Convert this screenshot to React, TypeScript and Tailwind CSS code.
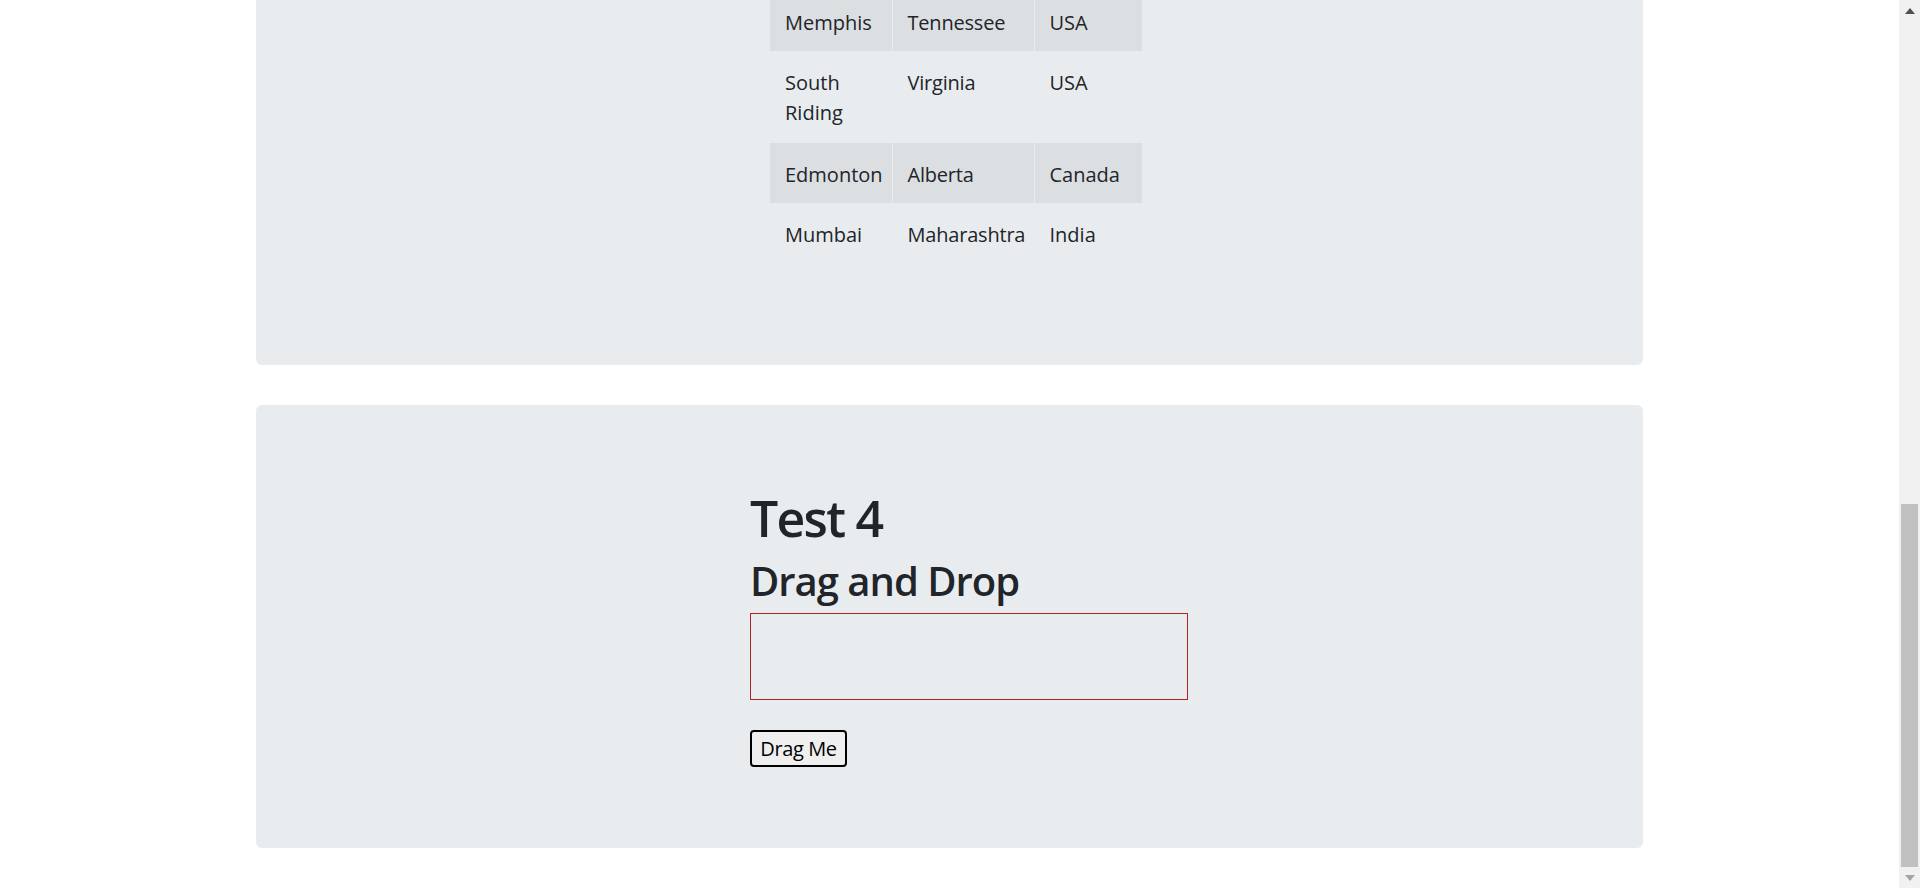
import React from "react";

type Place = { city: string; state: string; country: string; tall?: boolean };

const places: Place[] = [
  { city: "Memphis", state: "Tennessee", country: "USA" },
  { city: "South Riding", state: "Virginia", country: "USA", tall: true },
  { city: "Edmonton", state: "Alberta", country: "Canada" },
  { city: "Mumbai", state: "Maharashtra", country: "India" },
];

function Scrollbar() {
  return (
    <div className="flex w-[21px] shrink-0 flex-col bg-[#f1f1f1]">
      <div className="flex h-[21px] items-center justify-center">
        <svg width="10" height="6" viewBox="0 0 10 6">
          <path d="M5 0L10 6H0z" fill="#505050" />
        </svg>
      </div>
      <div className="flex flex-1 flex-col justify-end px-[2px]">
        <div className="h-[363px] bg-[#c1c1c1]" />
      </div>
      <div className="flex h-[21px] items-center justify-center">
        <svg width="10" height="6" viewBox="0 0 10 6">
          <path d="M0 0H10L5 6z" fill="#a3a3a3" />
        </svg>
      </div>
    </div>
  );
}

export default function App() {
  return (
    <div
      className="flex h-[888px] overflow-hidden bg-white text-[#212529]"
      style={{ fontFamily: '"Open Sans", "Noto Sans", sans-serif' }}
    >
      <main className="min-w-0 flex-1">
        {/* tail of the table card, scrolled past its top */}
        <section className="mx-[256px] -mt-[9px] rounded-b-[6px] bg-[#e9ecef] pb-[102px] pl-[514px]">
          <table className="w-[372px] table-fixed border-collapse text-[20px] leading-[30px]">
            <colgroup>
              <col className="w-[122px]" />
              <col className="w-[142px]" />
              <col className="w-[108px]" />
            </colgroup>
            <tbody>
              {places.map((p, i) => (
                <tr
                  key={p.city}
                  className={`${i % 2 === 0 ? "bg-[#dcdfe2]" : ""} ${p.tall ? "h-[92px]" : "h-[60px]"}`}
                >
                  <td className="px-[15px] pt-[17px] align-top">{p.city}</td>
                  <td className="border-l border-[#e9ecef] pl-[15px] pr-[4px] pt-[17px] align-top tracking-[-0.01em]">{p.state}</td>
                  <td className="border-l border-[#e9ecef] pl-[15px] pt-[17px] align-top">{p.country}</td>
                </tr>
              ))}
            </tbody>
          </table>
        </section>

        <section className="mx-[256px] mt-[40px] rounded-[6px] bg-[#e9ecef] pb-[81px] pl-[494px] pt-[80px]">
          <h1 className="mb-[10px] pt-[6px] text-[50px] font-semibold leading-[54px] tracking-[-0.035em]">Test 4</h1>
          <h2 className="mb-[10px] pt-[4px] text-[40px] font-semibold leading-[44px] tracking-[-0.025em]">Drag and Drop</h2>
          <div className="h-[87px] w-[438px] border border-[#b22222]" />
          <button
            draggable
            className="mt-[30px] h-[37px] w-[97px] rounded-[4px] border-2 border-black bg-[#efefef] pt-[1px] text-center text-[20px] leading-[30px] tracking-[-0.02em] text-black"
          >
            Drag Me
          </button>
        </section>
      </main>
      <Scrollbar />
    </div>
  );
}
